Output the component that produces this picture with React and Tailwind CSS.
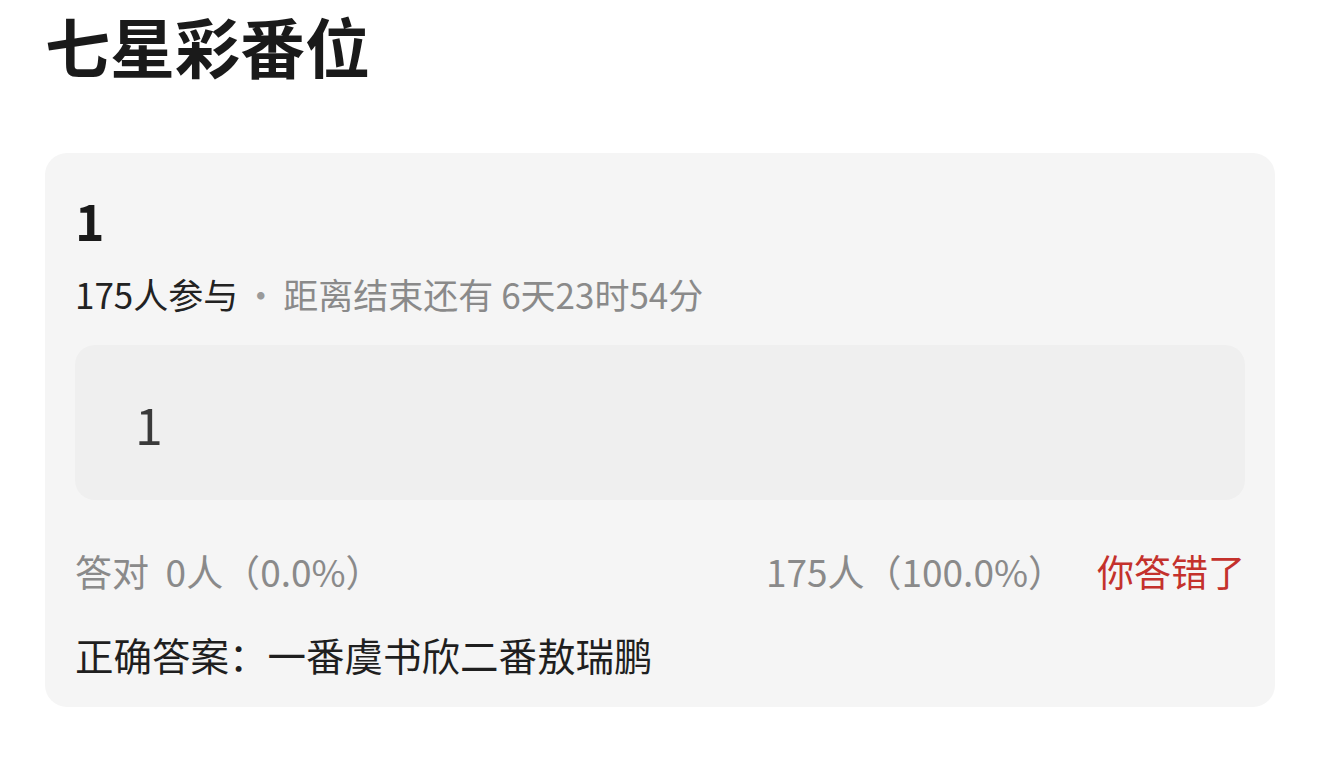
import React from 'react';

const font = { fontFamily: '"Noto Sans CJK SC", "Noto Sans", sans-serif' };

const poll = {
  title: '七星彩番位',
  question: '1',
  joined: 175,
  remaining: '6天23时54分',
  option: '1',
  right: { count: 0, pct: '0.0%' },
  wrong: { count: 175, pct: '100.0%' },
  answer: '一番虞书欣二番敖瑞鹏',
};

const App = () => {
  return (
    <div className="min-h-screen bg-white pl-[45px] pr-[45px]" style={font}>
      <h1 className="text-[65px] leading-[90px] font-bold text-[#1a1a1a]">
        {poll.title}
      </h1>

      <div className="mt-[63px] rounded-[22px] bg-[#f5f5f5] px-[30px] pt-[37px] pb-[29px]">
        <div className="flex h-[58px] items-center text-[50px] leading-none font-bold text-[#1a1a1a]">
          {poll.question}
        </div>

        <div className="mt-[21px] flex h-[48px] items-center text-[35px] leading-none">
          <span className="text-[#222222]">{poll.joined}人参与</span>
          <span className="mx-[5px] text-[#9a9a9a]">·</span>
          <span className="text-[#8a8a8a] whitespace-pre">距离结束还有 {poll.remaining}</span>
        </div>

        <div className="mt-[28px] flex h-[155px] items-center rounded-[20px] bg-[#efefef] pl-[60px] text-[50px] leading-none text-[#3a3a3a]">
          {poll.option}
        </div>

        <div className="mt-[47px] flex h-[48px] items-center justify-between text-[37px] leading-none">
          <span className="text-[#8a8a8a] whitespace-pre">
            答对  {poll.right.count}人（{poll.right.pct}）
          </span>
          <div className="flex items-center">
            <span className="text-[#8a8a8a]">
              {poll.wrong.count}人（{poll.wrong.pct}）
            </span>
            <span className="ml-[32px] text-[#c4312c]">你答错了</span>
          </div>
        </div>

        <div className="mt-[35px] flex h-[48px] items-center text-[38.5px] leading-none text-[#1f1f1f]">
          正确答案：{poll.answer}
        </div>
      </div>
    </div>
  );
};

export default App;
